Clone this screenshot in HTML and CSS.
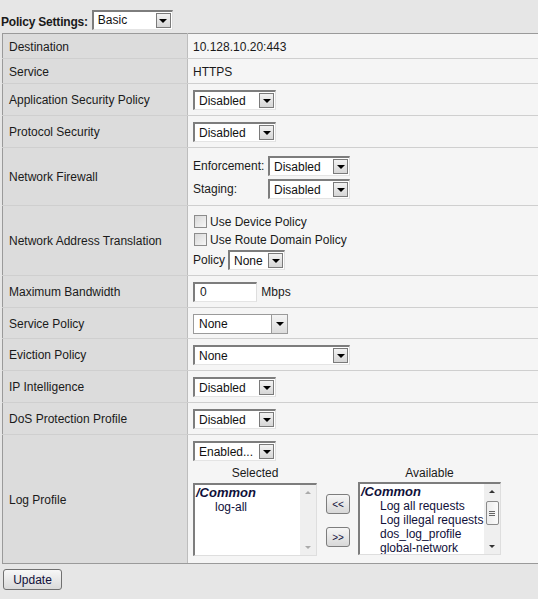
FILE: index.html
```html
<!DOCTYPE html>
<html>
<head>
<meta charset="utf-8">
<link rel="stylesheet" href="styles.css">
</head>
<body>
<div class="topbar">
  <span class="top-label">Policy Settings:</span>
  <span class="sel w81"><span class="sel-val">Basic</span><span class="sel-btn"></span></span>
</div>
<table class="settings">
  <tr class="h25"><td class="lbl">Destination</td><td class="val">10.128.10.20:443</td></tr>
  <tr class="h25"><td class="lbl">Service</td><td class="val">HTTPS</td></tr>
  <tr class="h32"><td class="lbl">Application Security Policy</td><td class="val"><span class="sel w83"><span class="sel-val">Disabled</span><span class="sel-btn"></span></span></td></tr>
  <tr class="h32"><td class="lbl">Protocol Security</td><td class="val"><span class="sel w83"><span class="sel-val">Disabled</span><span class="sel-btn"></span></span></td></tr>
  <tr class="h58"><td class="lbl">Network Firewall</td><td class="val">
    <div class="fw-grid">
      <span>Enforcement:</span><span class="sel w82"><span class="sel-val">Disabled</span><span class="sel-btn"></span></span>
      <span>Staging:</span><span class="sel w82"><span class="sel-val">Disabled</span><span class="sel-btn"></span></span>
    </div>
  </td></tr>
  <tr class="h70"><td class="lbl">Network Address Translation</td><td class="val">
    <div class="nat">
      <label class="chk-row"><span class="chk"></span>Use Device Policy</label>
      <label class="chk-row"><span class="chk"></span>Use Route Domain Policy</label>
      <div class="pol-row">Policy <span class="sel w57"><span class="sel-val">None</span><span class="sel-btn"></span></span></div>
    </div>
  </td></tr>
  <tr class="h32"><td class="lbl">Maximum Bandwidth</td><td class="val"><span class="txt-in">0</span> <span class="unit">Mbps</span></td></tr>
  <tr class="h31"><td class="lbl">Service Policy</td><td class="val"><span class="sel sel-flat w95"><span class="sel-val">None</span><span class="sel-btn"></span></span></td></tr>
  <tr class="h32"><td class="lbl">Eviction Policy</td><td class="val"><span class="sel w157"><span class="sel-val">None</span><span class="sel-btn"></span></span></td></tr>
  <tr class="h32"><td class="lbl">IP Intelligence</td><td class="val"><span class="sel w83"><span class="sel-val">Disabled</span><span class="sel-btn"></span></span></td></tr>
  <tr class="h32"><td class="lbl">DoS Protection Profile</td><td class="val"><span class="sel w83"><span class="sel-val">Disabled</span><span class="sel-btn"></span></span></td></tr>
  <tr class="h129"><td class="lbl">Log Profile</td><td class="val log">
    <span class="sel w83"><span class="sel-val">Enabled...</span><span class="sel-btn"></span></span>
    <div class="dual">
      <div class="col col-sel">
        <div class="col-head">Selected</div>
        <div class="listbox">
          <div class="list-items">
            <div class="grp">/Common</div>
            <div class="item">log-all</div>
          </div>
          <div class="sb sb-off"><span class="sb-up"></span><span class="sb-dn"></span></div>
        </div>
      </div>
      <div class="movers">
        <span class="btn-sm">&lt;&lt;</span>
        <span class="btn-sm">&gt;&gt;</span>
      </div>
      <div class="col col-av">
        <div class="col-head">Available</div>
        <div class="listbox">
          <div class="list-items">
            <div class="grp">/Common</div>
            <div class="item">Log all requests</div>
            <div class="item">Log illegal requests</div>
            <div class="item">dos_log_profile</div>
            <div class="item">global-network</div>
          </div>
          <div class="sb"><span class="sb-up"></span><span class="sb-thumb"></span><span class="sb-dn"></span></div>
        </div>
      </div>
    </div>
  </td></tr>
</table>
<div class="footer">
  <span class="btn">Update</span>
</div>
</body>
</html>
```
FILE: styles.css
```css
html, body {
  margin: 0;
  padding: 0;
  background: #e6e6e6;
  font-family: "Liberation Sans", Arial, sans-serif;
  font-size: 12px;
  color: #1a1a1a;
}

.topbar {
  height: 33px;
  display: flex;
  align-items: center;
  padding-left: 1px;
  padding-top: 6px;
  box-sizing: border-box;
  gap: 4px;
}
.top-label {
  font-weight: bold;
  font-size: 12px;
  margin-top: 4px;
  letter-spacing: -0.2px;
}

.settings {
  border-collapse: collapse;
  margin-left: 2px;
  width: calc(100% - 1px);
}
.settings td {
  padding: 0;
  border-top: 1px solid #cfcfcf;
  border-bottom: 1px solid #cfcfcf;
}
.settings tr:first-child td { border-top: 1px solid #9a9a9a; }
.settings tr:last-child td { border-bottom: 1px solid #9a9a9a; }
.lbl {
  width: 178px;
  padding-left: 6px !important;
  padding-top: 1px !important;
  background: #dcdcdc;
  border-left: 1px solid #9a9a9a;
  border-right: 1px solid #bdbdbd;
  vertical-align: middle;
}
.val {
  background: #f5f5f5;
  padding-left: 5px !important;
  padding-top: 1px !important;
  vertical-align: middle;
}
.h25 { height: 25px; }
.h31 { height: 31px; }
.h32 { height: 32px; }
.h58 { height: 58px; }
.h70 { height: 70px; }
.h129 { height: 129px; }

/* select imitation */
.sel {
  display: inline-flex;
  align-items: center;
  justify-content: space-between;
  height: 20px;
  box-sizing: border-box;
  background: #fff;
  border-top: 2px solid #7d7d7d;
  border-left: 2px solid #7d7d7d;
  border-right: 1px solid #dedede;
  border-bottom: 1px solid #e4e4e4;
  padding-left: 4px;
  vertical-align: middle;
  font-size: 12px;
  color: #111;
}
.sel-val { white-space: nowrap; }
.sel-btn {
  width: 15px;
  height: 15px;
  box-sizing: border-box;
  border: 1px solid #7a7a7a;
  background: linear-gradient(#f2f2f2, #d6d6d6);
  margin-right: 1px;
  display: flex;
  align-items: center;
  justify-content: center;
}
.sel-btn::after {
  content: "";
  width: 0;
  height: 0;
  border-left: 4px solid transparent;
  border-right: 4px solid transparent;
  border-top: 4px solid #000;
  margin-top: 1px;
}
.sel-flat {
  border: 1px solid #9a9a9a;
  padding-left: 5px;
}
.sel-flat .sel-btn {
  height: 18px;
  width: 16px;
  margin-right: 0;
  border: none;
  border-left: 1px solid #9a9a9a;
  background: linear-gradient(#f4f4f4, #dcdcdc);
}
.w57 { width: 57px; }
.w81 { width: 81px; }
.w82 { width: 82px; }
.w83 { width: 83px; }
.w95 { width: 95px; }
.w157 { width: 157px; }

.fw-grid {
  display: grid;
  grid-template-columns: 75px auto;
  row-gap: 3px;
  align-items: center;
  justify-items: start;
  padding-top: 1px;
}

.nat {
  display: flex;
  flex-direction: column;
  gap: 5px;
  padding-top: 3px;
}
.chk-row {
  display: flex;
  align-items: center;
  gap: 3px;
  height: 13px;
}
.chk {
  width: 13px;
  height: 13px;
  box-sizing: border-box;
  border: 1px solid #8c8c8c;
  background: linear-gradient(135deg, #d8d8d8, #f6f6f6);
  margin-left: 1px;
}
.pol-row {
  display: flex;
  align-items: center;
  gap: 3px;
  margin-top: -1px;
}

.txt-in {
  display: inline-block;
  width: 64px;
  height: 20px;
  box-sizing: border-box;
  background: #fff;
  border-top: 2px solid #7d7d7d;
  border-left: 2px solid #7d7d7d;
  border-right: 1px solid #dedede;
  border-bottom: 1px solid #e4e4e4;
  padding-left: 5px;
  line-height: 17px;
  vertical-align: middle;
}
.unit { margin-left: 1px; vertical-align: middle; }

/* log profile */
.log {
  vertical-align: top !important;
  padding-top: 6px !important;
}
.dual {
  display: flex;
  align-items: flex-start;
  margin-top: 6px;
}
.col { display: flex; flex-direction: column; }
.col-sel { width: 124px; }
.col-av { width: 143px; }
.col-head {
  text-align: center;
  height: 16px;
  line-height: 13px;
  color: #1a1a1a;
}
.listbox {
  height: 73px;
  box-sizing: border-box;
  background: #fff;
  border-top: 2px solid #7d7d7d;
  border-left: 2px solid #7d7d7d;
  border-right: 1px solid #dedede;
  border-bottom: 1px solid #dedede;
  display: flex;
}
.col-av .listbox { margin-top: -1px; }
.list-items {
  flex: 1;
  overflow: hidden;
  color: #10103a;
  line-height: 14px;
  padding-top: 1px;
  white-space: nowrap;
}
.grp {
  font-weight: bold;
  font-style: italic;
  font-size: 13px;
  padding-left: 1px;
}
.item { padding-left: 20px; }
.sb {
  width: 16px;
  background: #efefef;
  display: flex;
  flex-direction: column;
  align-items: center;
}
.sb-up, .sb-dn {
  width: 0; height: 0;
  border-left: 3px solid transparent;
  border-right: 3px solid transparent;
}
.sb-up { border-bottom: 3px solid #333; margin-top: 6px; }
.sb-dn { border-top: 3px solid #333; margin-top: auto; margin-bottom: 6px; }
.sb-off .sb-up { border-bottom-color: #aaa; }
.sb-off .sb-dn { border-top-color: #aaa; }
.sb-thumb {
  width: 13px;
  height: 24px;
  box-sizing: border-box;
  margin-top: 8px;
  border: 1px solid #8a8a8a;
  border-radius: 2px;
  background: linear-gradient(90deg, #ececec, #fbfbfb);
  display: flex;
  align-items: center;
  justify-content: center;
}
.sb-thumb::after {
  content: "";
  width: 6px;
  height: 5px;
  background: repeating-linear-gradient(#666 0 1px, transparent 1px 2px);
}
.movers {
  display: flex;
  flex-direction: column;
  gap: 13px;
  margin: 27px 8px 0 9px;
}
.btn-sm {
  width: 24px;
  height: 20px;
  box-sizing: border-box;
  border: 1px solid #7d7d7d;
  border-radius: 3px;
  background: linear-gradient(#f6f6f6, #d8d8d8);
  display: flex;
  align-items: center;
  justify-content: center;
  font-size: 10px;
  color: #10103a;
}

.footer {
  padding: 5px 0 0 3px;
}
.btn {
  display: inline-flex;
  align-items: center;
  justify-content: center;
  width: 59px;
  height: 21px;
  box-sizing: border-box;
  border: 1px solid #707070;
  border-radius: 3px;
  background: linear-gradient(#f7f7f7, #dadada);
  color: #10103a;
  font-size: 12px;
}
```
